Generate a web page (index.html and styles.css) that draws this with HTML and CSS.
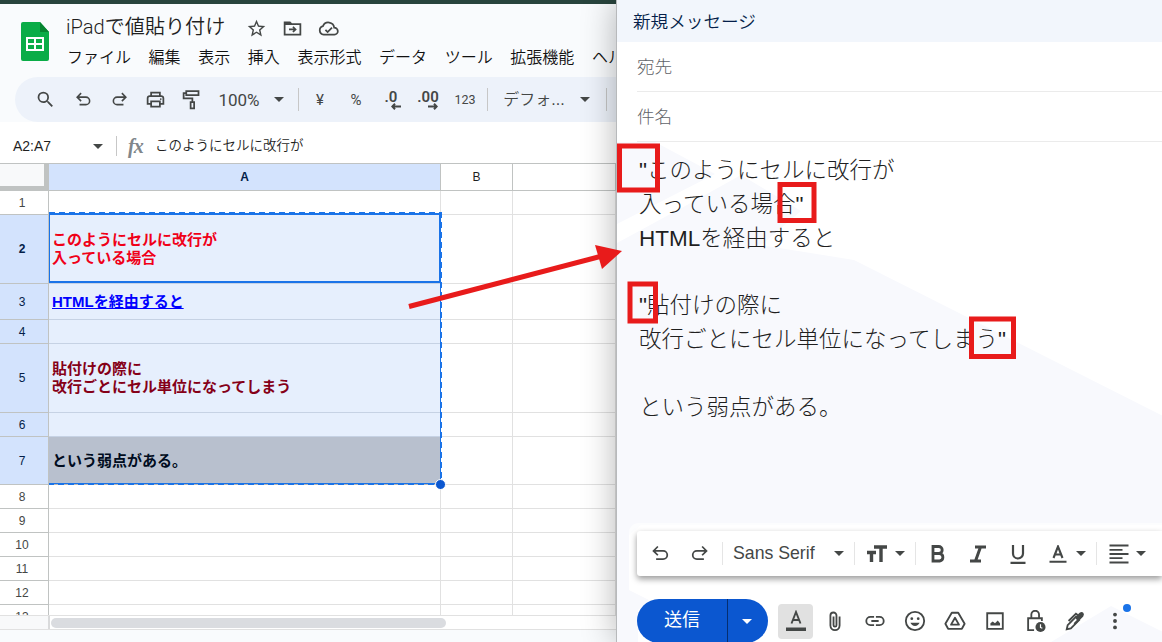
FILE: index.html
```
<!DOCTYPE html>
<html lang="ja">
  <head>
    <meta charset="UTF-8" />
    <meta name="viewport" content="width=device-width, initial-scale=1.0" />
    <title>iPadで値貼り付け</title>
    <link rel="stylesheet" href="styles.css">
  </head>
  <body>
    <svg class="defs" width="0" height="0">
      <symbol id="undo" viewBox="0 0 24 24"><path d="M4 9h11a4.500 4.500 0 0 1 0 9.500H7M9 4 4 9l5 5" class="line" /></symbol>
      <symbol id="redo" viewBox="0 0 24 24"><path d="M20 9H9a4.500 4.500 0 0 0 0 9.500h8M15 4l5 5-5 5" class="line" /></symbol>
      <symbol id="caret" viewBox="0 0 10 5"><path d="M0 0h10L5 5z" /></symbol>
    </svg>

    <div class="sheet">
      <div class="topbar"></div>
      <header class="header">
        <svg class="logo" width="28" height="39" viewBox="0 0 28 39">
          <path d="M2 0h17l9 10v27a2 2 0 0 1-2 2H2a2 2 0 0 1-2-2V2a2 2 0 0 1 2-2z" fill="#0aac47" />
          <path d="M19 0l9 10h-9z" fill="#068430" />
          <path d="M6 16h16v12H6zM14 16v12M6 22h16" fill="none" stroke="#fff" stroke-width="2" />
        </svg>
        <div>
          <div class="title-row">
            <h1>iPadで値貼り付け</h1>
            <svg class="icon star" viewBox="0 0 24 24"><path d="M22 9.240l-7.190-.620L12 2 9.190 8.630 2 9.240l5.460 4.730L5.820 21 12 17.270 18.180 21l-1.630-7.030L22 9.240zM12 15.400l-3.760 2.270 1-4.280-3.320-2.880 4.380-.380L12 6.100l1.710 4.040 4.380.380-3.320 2.880 1 4.280L12 15.400z" /></svg>
            <svg class="icon folder" viewBox="0 0 24 24"><path d="M3 19V5h6l2 2h10v12z" class="line" /><path d="M3 5h6l2 3H3z" /><path d="M8 13h7M12.500 10l3 3-3 3" class="line" /></svg>
            <svg class="icon cloud" viewBox="0 0 24 24"><path d="M6.500 19a5 5 0 0 1-.8-9.800A6.700 6.700 0 0 1 18.500 11a4 4 0 0 1 .3 8zM8.500 13.500l2.500 2.500 5-5" class="line" /></svg>
          </div>
          <nav class="menu">
            <span>ファイル</span><span>編集</span><span>表示</span><span>挿入</span><span>表示形式</span><span>データ</span><span>ツール</span><span>拡張機能</span><span>ヘルプ</span>
          </nav>
        </div>
      </header>

      <div class="toolbar">
        <span><svg class="icon" viewBox="0 0 24 24"><path d="M15.500 14h-.79l-.28-.27A6.470 6.470 0 0 0 16 9.500 6.500 6.500 0 1 0 9.500 16c1.610 0 3.090-.59 4.230-1.570l.27.280v.79l5 4.990L20.490 19l-4.990-5zm-6 0a4.500 4.500 0 1 1 0-9 4.500 4.500 0 0 1 0 9z" /></svg></span>
        <span><svg class="icon small"><use href="#undo" /></svg></span>
        <span><svg class="icon small"><use href="#redo" /></svg></span>
        <span><svg class="icon" viewBox="0 0 24 24"><path d="M7 8V4h10v4M7 17H3v-6.500A2.500 2.500 0 0 1 5.500 8h13a2.500 2.500 0 0 1 2.500 2.500V17h-4M7 14h10v6H7z" class="line" /><circle cx="18" cy="11.500" r="1" /></svg></span>
        <span><svg class="icon" viewBox="0 0 24 24"><path d="M6 2.500h14v4.500H6zM6 4.700H3v6h10V15M11 15h4v7h-4z" class="line" /></svg></span>
        <span class="zoom">100%</span>
        <span><svg class="caret"><use href="#caret" /></svg></span>
        <span class="sep"></span>
        <span class="format">¥</span>
        <span class="format">%</span>
        <span class="decimal">.0<svg width="10" height="7" viewBox="0 0 10 7"><path d="M10 3.500H1.500M4 .8 1.300 3.500 4 6.200" class="line" /></svg></span>
        <span class="decimal">.00<svg width="10" height="7" viewBox="0 0 10 7"><path d="M0 3.500h8.500M6 .8l2.700 2.700L6 6.200" class="line" /></svg></span>
        <span class="number">123</span>
        <span class="sep"></span>
        <span class="font">デフォ...</span>
        <span><svg class="caret"><use href="#caret" /></svg></span>
        <span class="sep"></span>
      </div>

      <div class="formula-bar">
        <span class="range">A2:A7</span>
        <svg class="caret"><use href="#caret" /></svg>
        <span class="sep"></span>
        <i class="fx">fx</i>
        <span class="formula">このようにセルに改行が</span>
      </div>

      <div class="grid">
        <div class="corner"></div><div class="col selected">A</div><div class="col">B</div><div class="col"></div>
        <div class="num">1</div><div></div><div></div><div></div>
        <div class="num selected strong">2</div><div class="picked red">このようにセルに改行が<br>入っている場合</div><div></div><div></div>
        <div class="num selected">3</div><div class="picked"><u>HTMLを経由すると</u></div><div></div><div></div>
        <div class="num selected">4</div><div class="picked"></div><div></div><div></div>
        <div class="num selected">5</div><div class="picked maroon">貼付けの際に<br>改行ごとにセル単位になってしまう</div><div></div><div></div>
        <div class="num selected">6</div><div class="picked"></div><div></div><div></div>
        <div class="num selected">7</div><div class="picked gray">という弱点がある。</div><div></div><div></div>
        <div class="num">8</div><div></div><div></div><div></div>
        <div class="num">9</div><div></div><div></div><div></div>
        <div class="num">10</div><div></div><div></div><div></div>
        <div class="num">11</div><div></div><div></div><div></div>
        <div class="num">12</div><div></div><div></div><div></div>
        <div class="num">13</div><div></div><div></div><div></div>
        <svg class="selection" width="400" height="282" viewBox="0 0 400 282">
          <path d="M0 2H392M0 70H392M391 1V71" fill="none" stroke="#1a73e8" stroke-width="2" />
          <path d="M.5 1V71" fill="none" stroke="#1a73e8" />
          <path d="M0 .5H393" fill="none" stroke="#1a73e8" stroke-dasharray="6 4" />
          <path d="M391.500 71V272M0 271.500H391" fill="none" stroke="#1a73e8" />
          <path d="M392.500 0V272" fill="none" stroke="#1a73e8" stroke-dasharray="6 4" />
          <path d="M0 272.500H391" fill="none" stroke="#1a73e8" />
          <path d="M5 272.500H391" fill="none" stroke="#b7b7b7" stroke-dasharray="4 6" />
          <circle cx="391.500" cy="272.500" r="5" fill="#0b57d0" stroke="#fff" />
        </svg>
      </div>
      <div class="scroll"><div class="scroll-start"></div><div class="thumb"></div></div>
      <div class="footer"></div>
    </div>

    <div class="mail">
      <svg class="tint" width="546" height="642" viewBox="616 0 546 642">
        <path d="M616 142h38l60 32-98 50zM616 243l70-38 54-30 60 36-40 34 93 15 309 156v109H640l-12 10v55l20 10-11 10v32h-21zM1050 642l60-36 52 26v10z" fill="#f8f9fd" />
      </svg>
      <div class="mail-head">新規メッセージ</div>
      <div class="field">宛先</div>
      <div class="field">件名</div>
      <div class="message">"このようにセルに改行が<br>入っている場合"<br>HTMLを経由すると<br><br>"貼付けの際に<br>改行ごとにセル単位になってしまう"<br><br>という弱点がある。</div>

      <div class="format-bar">
        <span><svg class="icon"><use href="#undo" /></svg></span>
        <span><svg class="icon"><use href="#redo" /></svg></span>
        <span class="sep"></span>
        <span class="family">Sans Serif</span>
        <span><svg class="caret"><use href="#caret" /></svg></span>
        <span class="sep"></span>
        <span><svg width="22" height="18" viewBox="0 0 22 18"><path d="M8 2h13M15 2v15M1 7.500h9M5.500 7.500V17" fill="none" stroke="#444746" stroke-width="3.400" /></svg></span>
        <span><svg class="caret"><use href="#caret" /></svg></span>
        <span class="sep"></span>
        <span><svg width="14" height="18" viewBox="0 0 14 18"><path d="M2 1.500h5.700a3.500 3.500 0 0 1 0 7H2zM2 8.500h6.700a3.800 3.800 0 0 1 0 7.500H2z" fill="none" stroke="#444746" stroke-width="2.800" /></svg></span>
        <span><svg width="16" height="18" viewBox="0 0 16 18"><path d="M5 2h11M0 16h11M10.500 2l-5 14" fill="none" stroke="#444746" stroke-width="3" /></svg></span>
        <span><svg width="16" height="20" viewBox="0 0 16 20"><path d="M3 1v8.500a5 5 0 0 0 10 0V1M.5 18.800h15" fill="none" stroke="#444746" stroke-width="2.200" /></svg></span>
        <span><svg width="18" height="18" viewBox="0 0 18 18"><path d="M4.500 13 9 1.500 13.500 13M6 9.500h6M.5 16.800h17" fill="none" stroke="#444746" stroke-width="2.100" /></svg></span>
        <span><svg class="caret"><use href="#caret" /></svg></span>
        <span class="sep"></span>
        <span><svg width="20" height="20" viewBox="0 0 20 20"><path d="M.5 1.500h19M.5 5.800h13M.5 10h19M.5 14.200h13M.5 18.500h19" fill="none" stroke="#444746" stroke-width="1.800" /></svg></span>
        <span><svg class="caret"><use href="#caret" /></svg></span>
      </div>

      <div class="actions">
        <div class="send"><span>送信</span><span class="more"><svg class="caret"><use href="#caret" /></svg></span></div>
        <div class="text-color"><svg width="22" height="22" viewBox="0 0 22 22"><path d="M6.500 13.500 11 2l4.500 11.500M8 10h6" fill="none" stroke="#444746" stroke-width="1.900" /><path d="M1 17.500h20v3.500H1z" /></svg></div>
        <svg class="icon" viewBox="0 0 24 24"><path d="M17 6.500v10a5 5 0 0 1-10 0V5.500a3.300 3.300 0 0 1 6.600 0v10.500a1.600 1.600 0 0 1-3.200 0V6.500" class="line" transform="translate(0 .5)" /></svg>
        <svg class="icon" viewBox="0 0 24 24"><path d="M11 7.500H7a4.500 4.500 0 0 0 0 9h4M13 7.500h4a4.500 4.500 0 0 1 0 9h-4M8 12h8" class="line" /></svg>
        <svg class="icon" viewBox="0 0 24 24"><circle cx="12" cy="12" r="10" class="line" /><circle cx="8.500" cy="9.500" r="1.500" /><circle cx="15.500" cy="9.500" r="1.500" /><path d="M7 14h10a5.400 5.400 0 0 1-10 0z" /></svg>
        <svg class="icon" viewBox="0 0 24 24"><path d="M8.500 3h7l7 12-3 5.500H4.500l-3-5.500zM12 8.500 16.300 16H7.700z" class="line" stroke-linejoin="round" /></svg>
        <svg class="icon" viewBox="0 0 24 24"><path d="M3.500 3.500h17v17h-17z" class="line" /><path d="M7 17v-2.500l2.500-2 2.500 2 3-3 2.500 3V17z" /></svg>
        <svg class="icon" viewBox="0 0 24 24"><path d="M8 9V5a4.200 4.200 0 0 1 8.400 0V9M11 22H4.500V9h15v3" class="line" /><circle cx="18" cy="18.500" r="5.500" /><path d="M18 15.500v3.500l2 1" fill="none" stroke="#fff" stroke-width="1.300" /></svg>
        <svg class="icon" viewBox="0 0 24 24"><path d="M3 21l1-4.500 9-9 3.500 3.500-9 9zM5 12l8-8 2 1.500" class="line" /><path d="M12 8l5-5q2.500-1.500 4 0t0 4l-9 9-1.500-1.500 3.500-3.500z" /></svg>
        <svg class="icon" viewBox="0 0 24 24"><circle cx="12" cy="5" r="2.100" /><circle cx="12" cy="12" r="2.100" /><circle cx="12" cy="19" r="2.100" /></svg>
        <i class="dot"></i>
      </div>
    </div>

    <svg class="marks" width="1162" height="642">
      <g fill="none" stroke="#e81b1b" stroke-width="5">
        <rect x="619.500" y="146" width="38" height="44" />
        <rect x="780" y="184.500" width="34" height="36" />
        <rect x="630" y="284" width="25.500" height="37" />
        <rect x="971.500" y="319" width="42" height="37.500" />
        <path d="M409 306.500 602 256" />
      </g>
      <path d="M595 245l27 6-20 18z" fill="#e81b1b" />
    </svg>
  </body>
</html>
```
FILE: styles.css
```
* {
  margin: 0;
  padding: 0;
  box-sizing: border-box;
}

body {
  display: flex;
  width: 1162px;
  height: 642px;
  position: relative;
  overflow: hidden;
  background: #fff;
  color: #1f1f1f;
  font-family: "Liberation Sans", "Noto Sans CJK JP", sans-serif;
}

svg {
  display: block;
  flex: none;
  fill: #444746;
}

.defs {
  position: absolute;
}

.line {
  fill: none;
  stroke: #444746;
  stroke-width: 2;
}

.icon {
  width: 21px;
  height: 21px;
}

.icon.small {
  width: 19px;
  height: 19px;
}

.caret {
  width: 10px;
  height: 5px;
}

.sheet {
  width: 616px;
  height: 642px;
  flex: none;
  overflow: hidden;
  background: #f9fbfd;
}

.topbar {
  height: 4px;
  background: #28443d;
}

.header {
  display: flex;
  height: 73px;
  padding-left: 21px;
  gap: 17px;
  white-space: nowrap;
}

.logo {
  margin-top: 18px;
}

.title-row {
  display: flex;
  align-items: center;
  height: 38px;
  padding-top: 8px;
}

h1 {
  width: 180px;
  font-family: Roboto, "Noto Sans CJK JP", sans-serif;
  font-size: 20.1px;
  font-weight: 350;
  line-height: 30px;
}

.star {
  margin: 3px 15px 0 0;
}

.folder {
  margin: 3px 15px 0 0;
}

.cloud {
  margin-top: 3px;
}

.menu {
  display: flex;
  gap: 17.6px;
  padding-left: 1px;
  color: #111;
  font-size: 16px;
  font-weight: 350;
  line-height: 31px;
}

.toolbar {
  display: grid;
  grid-template-columns: 40px 37px 35px 36px 36px 60px 20px 18px 26px 46px 24px 50px 24px 21px 72px 30px 13px;
  height: 45px;
  margin-left: 15px;
  padding-left: 10px;
  border-radius: 23px 0 0 23px;
  background: #edf2fa;
  color: #444746;
}

.toolbar span,
.format-bar span {
  display: flex;
  align-items: center;
  justify-content: center;
  white-space: nowrap;
}

.toolbar .sep::before,
.format-bar .sep::before {
  content: "";
  width: 1px;
  height: 23px;
  background: #c7c7c7;
}

.zoom {
  font-family: Roboto, sans-serif;
  font-size: 17px;
}

.format {
  font-family: Roboto, sans-serif;
  font-size: 15px;
}

.toolbar .decimal {
  flex-direction: column;
  font-family: Roboto, sans-serif;
  font-size: 15px;
  font-weight: 600;
  line-height: 14px;
}

.decimal svg {
  margin: -1px -10px 0 0;
}

.number {
  font-family: Roboto, sans-serif;
  font-size: 12.500px;
}

.toolbar .font {
  padding-bottom: 4px;
  font-size: 16px;
  font-weight: 350;
}

.formula-bar {
  display: flex;
  align-items: center;
  height: 41px;
  padding: 7px 0 0 13px;
  background: #fff;
}

.range {
  width: 80px;
  font-size: 14px;
}

.formula-bar .sep {
  width: 1px;
  height: 20px;
  margin: 0 11px 0 13px;
  background: #c7c7c7;
}

.fx {
  width: 28px;
  color: #80868b;
  font-family: "Liberation Serif", serif;
  font-size: 20px;
  font-weight: 700;
  letter-spacing: -1px;
}

.formula {
  margin: -4px 0 0 -1px;
  font-size: 13.5px;
  font-weight: 350;
}

.grid {
  position: relative;
  display: grid;
  grid-template-columns: 49px 392px 72px 103px;
  grid-template-rows: 28px 24px 69px 36px 24px 69px 24px 48px repeat(5, 24px) 24px;
  height: 452px;
  overflow: hidden;
  background: #fff;
}

.grid > div {
  display: flex;
  align-items: center;
  border-right: 1px solid #e1e1e1;
  border-bottom: 1px solid #e1e1e1;
}

.grid > .num,
.grid > .col {
  justify-content: center;
  border-color: #c0c3c2;
  font-size: 12px;
}

.grid > .num {
  padding-right: 4px;
  color: #444746;
}

.grid > .col {
  border-top: 1px solid #c0c3c2;
}

.grid > .selected {
  background: #d3e3fd;
  color: #041e49;
}

.grid > .strong,
.grid > .col.selected {
  font-weight: 700;
}

.grid > .corner {
  border-top: 1px solid #c0c3c2;
  border-right: 5px solid #c0c3c2;
  border-bottom: 5px solid #c0c3c2;
  background: #f8f9fa;
}

.grid > .picked {
  padding-left: 3px;
  border-color: #c6d2e4;
  background: #e6effd;
  font-size: 15px;
  font-weight: 700;
  line-height: 18px;
}

.red {
  color: #f00018;
}

.picked u {
  color: #00f;
}

.maroon {
  color: #850018;
}

.grid > .gray {
  background: #b8c0ce;
  color: #000c20;
}

.selection {
  position: absolute;
  left: 49px;
  top: 49px;
  overflow: visible;
}

.scroll {
  display: flex;
  align-items: center;
  height: 15px;
  border-top: 1px solid #e1e1e1;
  border-bottom: 1px solid #e1e1e1;
  background: #fff;
}

.scroll-start {
  width: 50px;
  height: 13px;
  border-right: 2px solid #d9dadb;
  background: #f8f9fa;
}

.thumb {
  width: 395px;
  height: 10px;
  margin-left: 1px;
  border-radius: 5px;
  background: #dadce0;
}

.footer {
  height: 12px;
}

.mail {
  position: relative;
  width: 546px;
  height: 642px;
  overflow: visible;
  border-left: 1px solid #b7b9bb;
  background: #fff;
  box-shadow: 0 0 32px rgba(0, 0, 0, 0.3);
}

.tint {
  position: absolute;
  left: 0;
  top: 0;
}

.mail > div {
  position: relative;
}

.mail-head {
  height: 42px;
  padding-left: 16px;
  background: #f2f6fc;
  color: #041e49;
  font-size: 17.6px;
  font-weight: 350;
  line-height: 45px;
}

.field {
  height: 50px;
  margin-left: 20px;
  border-bottom: 1px solid #ebebeb;
  color: #5f6368;
  font-size: 17.6px;
  font-weight: 300;
  line-height: 50px;
}

.message {
  height: 389px;
  padding: 12px 0 0 22px;
  font-size: 22.5px;
  font-weight: 300;
  line-height: 33.8px;
}

.format-bar {
  display: grid;
  grid-template-columns: 46px 32px 14px 107px 6px 24px 22px 24px 6px 40px 40px 40px 40px 6px 24px 22px 22px;
  height: 45px;
  margin-left: 20px;
  border-radius: 3px 0 0 3px;
  background: #fff;
  box-shadow: 0 3px 6px rgba(0, 0, 0, 0.4), 0 0 0 8px rgba(255, 255, 255, 0.6);
}

.format-bar .sep::before {
  background: #e5e5e5;
}

.format-bar .family {
  justify-content: flex-start;
  padding-left: 4px;
  color: #444746;
  font-size: 17.7px;
}

.actions {
  display: flex;
  align-items: center;
  height: 44px;
  margin: 23px 0 0 20px;
}

.actions .icon {
  width: 22px;
  height: 22px;
  margin-right: 18px;
}

.send {
  display: flex;
  width: 131px;
  height: 44px;
  overflow: hidden;
  border-radius: 22px;
  background: #0b57d0;
  color: #fff;
  font-size: 18px;
  line-height: 43px;
}

.send span {
  width: 90px;
  text-align: center;
}

.send .more {
  display: flex;
  align-items: center;
  justify-content: center;
  width: 41px;
  padding-right: 3px;
  border-left: 1px solid #052e70;
}

.send svg {
  fill: #fff;
}

.text-color {
  display: flex;
  align-items: center;
  justify-content: center;
  width: 35px;
  height: 35px;
  margin: 0 11px 0 10px;
  border-radius: 4px;
  background: #e1e1e1;
}

.dot {
  position: absolute;
  left: 486px;
  top: 5px;
  width: 8px;
  height: 8px;
  border-radius: 50%;
  background: #1a73e8;
}

.marks {
  position: absolute;
  left: 0;
  top: 0;
}
```
